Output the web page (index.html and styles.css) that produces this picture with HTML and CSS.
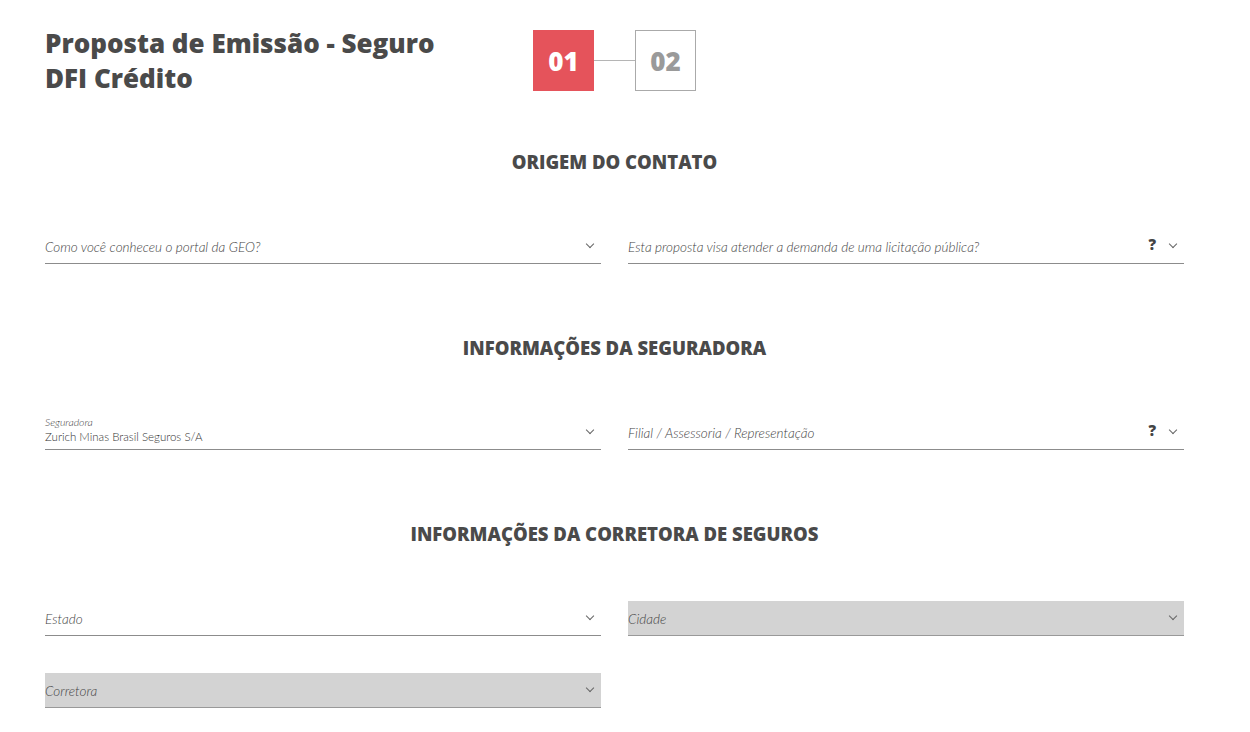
FILE: index.html
```html
<!DOCTYPE html>
<html lang="pt-BR">

<head>
    <meta charset="UTF-8">
    <meta name="viewport" content="width=device-width, initial-scale=1.0">
    <title>Proposta de Emissão - Seguro DFI Crédito</title>
    <link rel="stylesheet" href="styles.css">
</head>

<body>
    <div class="page">
        <div class="header">
            <h1>Proposta de Emissão - Seguro DFI Crédito</h1>
            <div class="steps">
                <div class="step active">01</div>
                <div class="step-line"></div>
                <div class="step">02</div>
            </div>
        </div>

        <div class="section first">
            <h2>ORIGEM DO CONTATO</h2>
            <div class="row">
                <div class="field">
                    <span class="placeholder">Como você conheceu o portal da GEO?</span>
                    <span class="chevron"></span>
                </div>
                <div class="field">
                    <span class="placeholder">Esta proposta visa atender a demanda de uma licitação pública?</span>
                    <span class="help">?</span>
                    <span class="chevron"></span>
                </div>
            </div>
        </div>

        <div class="section">
            <h2>INFORMAÇÕES DA SEGURADORA</h2>
            <div class="row">
                <div class="field">
                    <div class="filled">
                        <span class="label">Seguradora</span>
                        <span class="value">Zurich Minas Brasil Seguros S/A</span>
                    </div>
                    <span class="chevron"></span>
                </div>
                <div class="field">
                    <span class="placeholder">Filial / Assessoria / Representação</span>
                    <span class="help">?</span>
                    <span class="chevron"></span>
                </div>
            </div>
        </div>

        <div class="section">
            <h2>INFORMAÇÕES DA CORRETORA DE SEGUROS</h2>
            <div class="row">
                <div class="field">
                    <span class="placeholder">Estado</span>
                    <span class="chevron"></span>
                </div>
                <div class="field disabled">
                    <span class="placeholder">Cidade</span>
                    <span class="chevron"></span>
                </div>
                <div class="field disabled">
                    <span class="placeholder">Corretora</span>
                    <span class="chevron"></span>
                </div>
            </div>
        </div>
    </div>
</body>
</html>
```

FILE: styles.css
```css
body {
    margin: 0;
    font-family: Lato, "Open Sans", sans-serif;
    color: #4a4a4a;
    background: #fff;
}

.page {
    width: 1139px;
    padding: 26px 0 40px 45px;
}

.header {
    display: flex;
    align-items: flex-start;
}

.header h1 {
    width: 488px;
    margin: 0;
    padding-right: 64px;
    font-family: "Open Sans", sans-serif;
    font-size: 26px;
    font-weight: 800;
    line-height: 35px;
    color: #4a4a4a;
    box-sizing: border-box;
}

.steps {
    display: flex;
    align-items: center;
    margin-top: 4px;
}

.step {
    width: 61px;
    height: 61px;
    box-sizing: border-box;
    border: 1px solid #aaa;
    display: flex;
    justify-content: center;
    align-items: center;
    font-family: "Open Sans", sans-serif;
    font-size: 26px;
    font-weight: 800;
    color: #9a9a9a;
}

.step.active {
    background-color: #e5535b;
    border-color: #e5535b;
    color: #fff;
}

.step-line {
    width: 41px;
    height: 1px;
    background-color: #b5b5b5;
}

.section {
    margin-top: 72px;
}

.section.first {
    margin-top: 54px;
}

.section h2 {
    margin: 0 0 55px;
    text-align: center;
    font-family: "Open Sans", sans-serif;
    font-size: 18.5px;
    font-weight: 800;
    line-height: 24px;
    color: #4a4a4a;
}

.row {
    display: grid;
    grid-template-columns: 1fr 1fr;
    column-gap: 27px;
    row-gap: 37px;
}

.field {
    height: 35px;
    box-sizing: border-box;
    border-bottom: 1px solid #8c8c8c;
    display: flex;
    align-items: center;
    padding: 0 6px 0 0;
    font-size: 13.5px;
}

.field.disabled {
    background-color: #d3d3d3;
    border-bottom-color: #999;
}

.placeholder {
    flex: 1;
    font-style: italic;
    font-weight: 300;
    color: #444;
    padding-top: 2px;
}

.filled {
    flex: 1;
    display: flex;
    flex-direction: column;
    margin-top: -4px;
}

.filled .label {
    font-size: 10.5px;
    font-style: italic;
    font-weight: 300;
    color: #444;
    line-height: 13px;
}

.filled .value {
    font-size: 11.5px;
    font-weight: 300;
    color: #333;
    line-height: 15px;
}

.help {
    font-family: "Open Sans", sans-serif;
    font-weight: 800;
    font-size: 15px;
    color: #444;
    margin-right: 14px;
    margin-top: -4px;
}

.chevron {
    width: 5px;
    height: 5px;
    border-right: 1px solid #666;
    border-bottom: 1px solid #666;
    transform: rotate(45deg);
    margin: -4px 2px 0 0;
}
```
